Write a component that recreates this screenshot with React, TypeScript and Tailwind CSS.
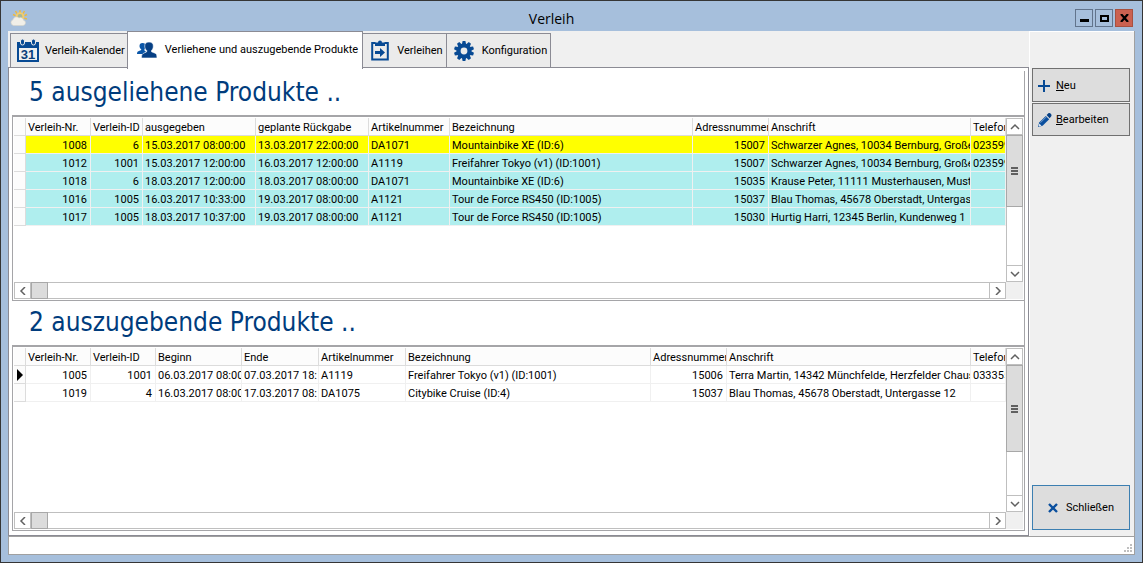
import { FC, ReactNode } from 'react'
import clsx from 'clsx'

interface Column {
  title: string
  /** Tailwind width of the column; the last column takes what is left. */
  width: string
  align?: 'right'
}

interface Row {
  cells: string[]
  /** Background of the data cells. */
  tone: string
  current?: boolean
}

const LENT_COLUMNS: Column[] = [
  { title: 'Verleih-Nr.', width: 'w-[65px]', align: 'right' },
  { title: 'Verleih-ID', width: 'w-[52px]', align: 'right' },
  { title: 'ausgegeben', width: 'w-[113px]' },
  { title: 'geplante Rückgabe', width: 'w-[113px]' },
  { title: 'Artikelnummer', width: 'w-[81px]' },
  { title: 'Bezeichnung', width: 'w-[243px]' },
  { title: 'Adressnummer', width: 'w-[76px]', align: 'right' },
  { title: 'Anschrift', width: 'w-[202px]' },
  { title: 'Telefon', width: '' },
]

const LENT_ROWS: Row[] = [
  {
    tone: 'bg-[#ffff00]',
    cells: ['1008', '6', '15.03.2017 08:00:00', '13.03.2017 22:00:00', 'DA1071', 'Mountainbike XE (ID:6)', '15007', 'Schwarzer Agnes, 10034 Bernburg, Große', '023599'],
  },
  {
    tone: 'bg-[#afeeee]',
    cells: ['1012', '1001', '15.03.2017 12:00:00', '16.03.2017 12:00:00', 'A1119', 'Freifahrer Tokyo (v1) (ID:1001)', '15007', 'Schwarzer Agnes, 10034 Bernburg, Große', '023599'],
  },
  {
    tone: 'bg-[#afeeee]',
    cells: ['1018', '6', '18.03.2017 12:00:00', '18.03.2017 08:00:00', 'DA1071', 'Mountainbike XE (ID:6)', '15035', 'Krause Peter, 11111 Musterhausen, Muste', ''],
  },
  {
    tone: 'bg-[#afeeee]',
    cells: ['1016', '1005', '16.03.2017 10:33:00', '19.03.2017 08:00:00', 'A1121', 'Tour de Force RS450 (ID:1005)', '15037', 'Blau Thomas, 45678 Oberstadt, Untergass', ''],
  },
  {
    tone: 'bg-[#afeeee]',
    cells: ['1017', '1005', '18.03.2017 10:37:00', '19.03.2017 08:00:00', 'A1121', 'Tour de Force RS450 (ID:1005)', '15030', 'Hurtig Harri, 12345 Berlin, Kundenweg 1', ''],
  },
]

const DUE_COLUMNS: Column[] = [
  { title: 'Verleih-Nr.', width: 'w-[65px]', align: 'right' },
  { title: 'Verleih-ID', width: 'w-[65px]', align: 'right' },
  { title: 'Beginn', width: 'w-[86px]' },
  { title: 'Ende', width: 'w-[77px]' },
  { title: 'Artikelnummer', width: 'w-[87px]' },
  { title: 'Bezeichnung', width: 'w-[245px]' },
  { title: 'Adressnummer', width: 'w-[76px]', align: 'right' },
  { title: 'Anschrift', width: 'w-[244px]' },
  { title: 'Telefon', width: '' },
]

const DUE_ROWS: Row[] = [
  {
    tone: 'bg-white',
    current: true,
    cells: ['1005', '1001', '06.03.2017 08:00', '07.03.2017 18:', 'A1119', 'Freifahrer Tokyo (v1) (ID:1001)', '15006', 'Terra Martin, 14342 Münchfelde, Herzfelder Chaus', '033355'],
  },
  {
    tone: 'bg-white',
    cells: ['1019', '4', '16.03.2017 08:00', '17.03.2017 08:', 'DA1075', 'Citybike Cruise (ID:4)', '15037', 'Blau Thomas, 45678 Oberstadt, Untergasse 12', ''],
  },
]

const WeatherIcon = () => (
  <svg viewBox="0 0 18 18" className="size-[18px]" aria-hidden="true">
    <g stroke="#f0b93a" strokeWidth="1.4">
      <path d="M10 1v3M5.500 2l1.500 2.600M14.500 2l-1.500 2.600M3 5.500l2.500 1.200M17 5.500l-2.500 1.200M16.800 10l-2.500-.8" />
    </g>
    <circle cx="10" cy="7.500" r="4.200" fill="#f3cd6b" />
    <circle cx="10" cy="7.500" r="2.400" fill="#a9b89a" />
    <path d="M3.500 16.500a3 3 0 0 1-.5-5.800 3.600 3.600 0 0 1 6-1.700 3 3 0 0 1 4.500 2.200 2.700 2.700 0 0 1-.5 5.300z" fill="#f1efe8" stroke="#d9d5ca" strokeWidth=".6" />
  </svg>
)

const CalendarIcon = () => (
  <svg viewBox="0 0 22 24" className="h-6 w-[22px]" aria-hidden="true">
    <path d="M0 3h22v20H0z" fill="#084a94" />
    <path d="M2 9h18v12H2z" fill="#f0f0f0" />
    <g fill="#084a94" stroke="#ebebeb" strokeWidth="1">
      <rect x="3.500" y="0" width="4" height="6" rx="2" />
      <rect x="14.500" y="0" width="4" height="6" rx="2" />
    </g>
    <text x="11" y="20" textAnchor="middle" fontSize="13" fontWeight="700" fill="#0b3f7c" fontFamily="Liberation Sans, sans-serif">
      31
    </text>
  </svg>
)

const PeopleIcon = () => (
  <svg viewBox="0 0 20 16" className="h-4 w-5" aria-hidden="true">
    <path
      d="M5.500 1C7.800 1 8.600 2.300 8.600 4c0 1.500-.5 2.700-1.200 3.400v1L9 9.500 6.500 12H0c0-2 .7-2.600 2.500-3.200l1.700-.7v-.8C3.300 6.500 2.500 5.500 2.500 4c0-1.700 1-3 3-3z"
      fill="#0a56a8"
    />
    <path
      d="M12 0c2.800 0 4.300 1.600 4.300 4 0 2-.7 3.600-1.800 4.500v1.300l3 1.200c2 .8 2.500 1.700 2.500 5H4.500c0-3.300.6-4.200 2.700-5l2.500-1.200V8.500C8.500 7.600 7.700 6 7.700 4c0-2.400 1.500-4 4.300-4z"
      fill="#063f84"
      stroke="#fff"
      strokeWidth=".6"
    />
  </svg>
)

const CheckoutIcon = () => (
  <svg viewBox="0 0 18 21" className="h-[21px] w-[18px]" aria-hidden="true">
    <path d="M4.500 3H1.200v16.500h15.600V3h-3.300" fill="none" stroke="#084a94" strokeWidth="2" />
    <path d="M4 2.500h3A2 2 0 0 1 9 .5a2 2 0 0 1 2 2h3V6H4z" fill="#084a94" />
    <path d="M4 11h5V8l5 4.500L9 17v-3H4z" fill="#084a94" />
  </svg>
)

const GEAR_TEETH = [0, 36, 72, 108, 144, 180, 216, 252, 288, 324]

const GearIcon = () => (
  <svg viewBox="0 0 20 20" className="size-5" aria-hidden="true">
    <g fill="#084a94">
      {GEAR_TEETH.map(angle => (
        <path key={angle} d="M8.600 0h2.800l.8 4H7.800z" transform={`rotate(${angle} 10 10)`} />
      ))}
    </g>
    <circle cx="10" cy="10" r="5.400" fill="none" stroke="#084a94" strokeWidth="4" />
  </svg>
)

const PlusIcon = () => (
  <svg viewBox="0 0 12 12" className="size-3" aria-hidden="true">
    <path d="M6 0v12M0 6h12" stroke="#084a94" strokeWidth="2" />
  </svg>
)

const PencilIcon = () => (
  <svg viewBox="0 0 14 14" className="size-3.5" aria-hidden="true">
    <path d="M0 14l1.200-4.500 6.600-6.600 3.400 3.400-6.600 6.500z" fill="#0a4f9e" />
    <path d="M8.600 2.100L10.200.6c.8-.8 1.800-.6 2.600.2s1 1.800.3 2.600l-1.500 1.800z" fill="#063f84" />
    <path d="M2.500 9.700l6-6" stroke="#7fa6d2" strokeWidth=".9" />
    <path d="M1.300 10.600l2.200 2.100-2.300.7-.5-.5z" fill="#dfe8f2" />
  </svg>
)

const CrossIcon = () => (
  <svg viewBox="0 0 10 10" className="size-2.5" aria-hidden="true">
    <path d="M1 1l8 8M9 1L1 9" stroke="#0a4f9e" strokeWidth="2.400" />
  </svg>
)

const CHEVRONS = {
  up: 'M1 6l4-4 4 4',
  down: 'M1 2l4 4 4-4',
  left: 'M7 0L3 4l4 4',
  right: 'M3 0l4 4-4 4',
}

const ScrollButton: FC<{ dir: keyof typeof CHEVRONS; label: string }> = ({ dir, label }) => (
  <button type="button" aria-label={label} className="flex size-[17px] shrink-0 items-center justify-center border border-[#bfbfbf] bg-white">
    <svg viewBox="0 0 10 8" className="h-2 w-2.5" aria-hidden="true">
      <path d={CHEVRONS[dir]} fill="none" stroke="#606060" strokeWidth="1.500" />
    </svg>
  </button>
)

const DataGrid: FC<{ label: string; columns: Column[]; rows: Row[]; thumb: string }> = ({ label, columns, rows, thumb }) => (
  <div className="flex min-h-0 flex-1 flex-col border border-t-2 border-[#a5a5a8] bg-white p-px">
    <div className="flex min-h-0 flex-1">
      <div className="min-w-0 flex-1 overflow-hidden">
        <table aria-label={label} className="w-full table-fixed border-separate border-spacing-0 leading-[15px]">
          <colgroup>
            <col className="w-3" />
            {columns.map(c => (
              <col key={c.title} className={c.width} />
            ))}
          </colgroup>
          <thead>
            <tr className="h-[18px]">
              <td className="border-r border-b border-[#dcdcdc] bg-[#fcfcfc] p-0" />
              {columns.map(c => (
                <th
                  key={c.title}
                  scope="col"
                  className="overflow-hidden border-r border-b border-[#dcdcdc] bg-[#fcfcfc] p-0 pt-0.5 pl-0.5 text-left font-normal whitespace-nowrap"
                >
                  {c.title}
                </th>
              ))}
            </tr>
          </thead>
          <tbody>
            {rows.map(row => (
              <tr key={row.cells[0]} className="h-[18px]">
                <td className="border-r border-b border-[#dcdcdc] bg-[#fcfcfc] p-0">
                  {row.current && (
                    <svg viewBox="0 0 11 12" className="h-3 w-[11px]" aria-label="Aktueller Datensatz">
                      <path d="M3 0l6 6-6 6z" fill="#000" />
                    </svg>
                  )}
                </td>
                {row.cells.map((cell, i) => (
                  <td
                    key={columns[i].title}
                    className={clsx(
                      'overflow-hidden border-r border-b border-[#f0f0f0] p-0 pt-0.5 whitespace-nowrap',
                      columns[i].align === 'right' ? 'pr-[3px] text-right' : 'pl-0.5',
                      row.tone,
                    )}
                  >
                    {cell}
                  </td>
                ))}
              </tr>
            ))}
          </tbody>
        </table>
      </div>
      <div className="flex w-[17px] shrink-0 flex-col bg-white">
        <ScrollButton dir="up" label="Nach oben" />
        <div className="flex-1 border-x border-[#bfbfbf]">
          <div className={clsx('-mx-px flex flex-col items-center justify-center gap-px border border-[#a8a8a8] bg-[#dcdcdc]', thumb)}>
            <span className="h-0.5 w-[7px] bg-[#606060]" />
            <span className="h-0.5 w-[7px] bg-[#606060]" />
            <span className="h-0.5 w-[7px] bg-[#606060]" />
          </div>
        </div>
        <ScrollButton dir="down" label="Nach unten" />
      </div>
    </div>
    <div className="flex h-[17px] shrink-0">
      <ScrollButton dir="left" label="Nach links" />
      <div className="flex-1 border-y border-[#bfbfbf]">
        <div className="-my-px h-[17px] w-[17px] border border-[#a8a8a8] bg-[#dcdcdc]" />
      </div>
      <ScrollButton dir="right" label="Nach rechts" />
      <div className="w-[17px] bg-[#f0f0f0]" />
    </div>
  </div>
)

const GridHeading: FC<{ children: ReactNode }> = ({ children }) => (
  <h2 className="flex h-11 shrink-0 items-center border-r border-[#a5a5a8] pb-0.5 pl-[17px] font-['DejaVu_Sans_Condensed','DejaVu_Sans',sans-serif] text-[26px] leading-8 font-normal text-[#003c7d]">
    {children}
  </h2>
)

const Tab: FC<{ icon: ReactNode; selected?: boolean; className: string; children: ReactNode }> = ({ icon, selected, className, children }) => (
  <button
    type="button"
    role="tab"
    aria-selected={!!selected}
    className={clsx(
      'flex items-center border-[#8b8b94] whitespace-nowrap',
      selected ? 'relative -mb-0.5 -ml-px h-[38px] border-x border-t bg-white pb-0.5' : 'h-[34px] border-t border-r bg-[#ebebeb]',
      className,
    )}
  >
    {icon}
    {children}
  </button>
)

const windowButton = 'flex size-[18px] items-center justify-center border'

export default function App() {
  return (
    <div className="flex h-screen flex-col border border-[#353535] bg-[#a6bfdc] px-[7px] pb-[7px] font-[Roboto,'Liberation_Sans',sans-serif] text-[11px] leading-4 text-black">
      <header className="flex h-[30px] shrink-0 items-center pt-1">
        <div className="flex flex-1 items-center pl-0.5">
          <WeatherIcon />
        </div>
        <h1 className="mr-10 pt-0.5 font-['Open_Sans',sans-serif] text-sm font-normal">Verleih</h1>
        <div className="flex flex-1 justify-end gap-0.5 pr-0.5">
          <button type="button" aria-label="Minimieren" className={clsx(windowButton, 'border-[#62748c]')}>
            <span className="mt-1 h-[3px] w-[9px] bg-black" />
          </button>
          <button type="button" aria-label="Maximieren" className={clsx(windowButton, 'border-[#62748c]')}>
            <span className="h-[7px] w-[9px] border-2 border-black" />
          </button>
          <button type="button" aria-label="Fenster schließen" className={clsx(windowButton, 'border-[#a8503f] bg-[#cb6150]')}>
            <svg viewBox="0 0 9 8" className="h-2 w-[9px]" aria-hidden="true">
              <path d="M1 0l7 8M8 0L1 8" stroke="#000" strokeWidth="2.200" />
            </svg>
          </button>
        </div>
      </header>

      <div className="flex min-h-0 flex-1 border-r border-[#a0a0a0] bg-[#f0f0f0]">
        <main className="flex min-w-0 flex-1 flex-col">
          <div role="tablist" className="flex h-9 shrink-0 items-end pl-0.5">
            <Tab icon={<CalendarIcon />} className="gap-1.5 border-l pr-0.5 pl-1.5">
              Verleih-Kalender
            </Tab>
            <Tab icon={<PeopleIcon />} selected className="gap-2 pr-1 pl-[9px]">
              Verliehene und auszugebende Produkte
            </Tab>
            <Tab icon={<CheckoutIcon />} className="gap-2 pr-[3px] pl-2">
              Verleihen
            </Tab>
            <Tab icon={<GearIcon />} className="gap-2 pr-[3px] pl-[7px]">
              Konfiguration
            </Tab>
          </div>

          <section className="flex min-h-0 flex-1 flex-col border border-[#8b8b94] bg-white px-[3px] pt-[3px] pb-1">
            <GridHeading>5 ausgeliehene Produkte ..</GridHeading>
            <DataGrid label="Ausgeliehene Produkte" columns={LENT_COLUMNS} rows={LENT_ROWS} thumb="h-[72px]" />
            <GridHeading>2 auszugebende Produkte ..</GridHeading>
            <DataGrid label="Auszugebende Produkte" columns={DUE_COLUMNS} rows={DUE_ROWS} thumb="h-[87px]" />
          </section>
        </main>

        <aside className="flex w-[105px] shrink-0 flex-col gap-px border-t border-l border-white pt-9 pr-1 pb-1.5 pl-0.5">
          <button type="button" className="flex h-[34px] items-center gap-1.5 border border-[#707070] bg-[#dddddd] pt-px pl-[5px]">
            <PlusIcon />
            <span>
              <u>N</u>eu
            </span>
          </button>
          <button type="button" className="flex h-[33px] items-center gap-1 border border-[#707070] bg-[#dddddd] pt-px pl-[5px]">
            <PencilIcon />
            <span>
              <u>B</u>earbeiten
            </span>
          </button>
          <button type="button" className="mt-auto flex h-[45px] items-center justify-center gap-2 border border-[#3c7fb1] bg-[#dddddd] pt-px">
            <CrossIcon />
            Schließen
          </button>
        </aside>
      </div>

      <footer className="flex h-[19px] shrink-0 items-end justify-end border border-[#a0a0a0] bg-white">
        <svg viewBox="0 0 10 10" className="size-2.5" aria-hidden="true">
          <path d="M6 0h2v2H6zM3 3h2v2H3zM6 3h2v2H6zM0 6h2v2H0zM3 6h2v2H3zM6 6h2v2H6z" fill="#bfbfbf" />
        </svg>
      </footer>
    </div>
  )
}
